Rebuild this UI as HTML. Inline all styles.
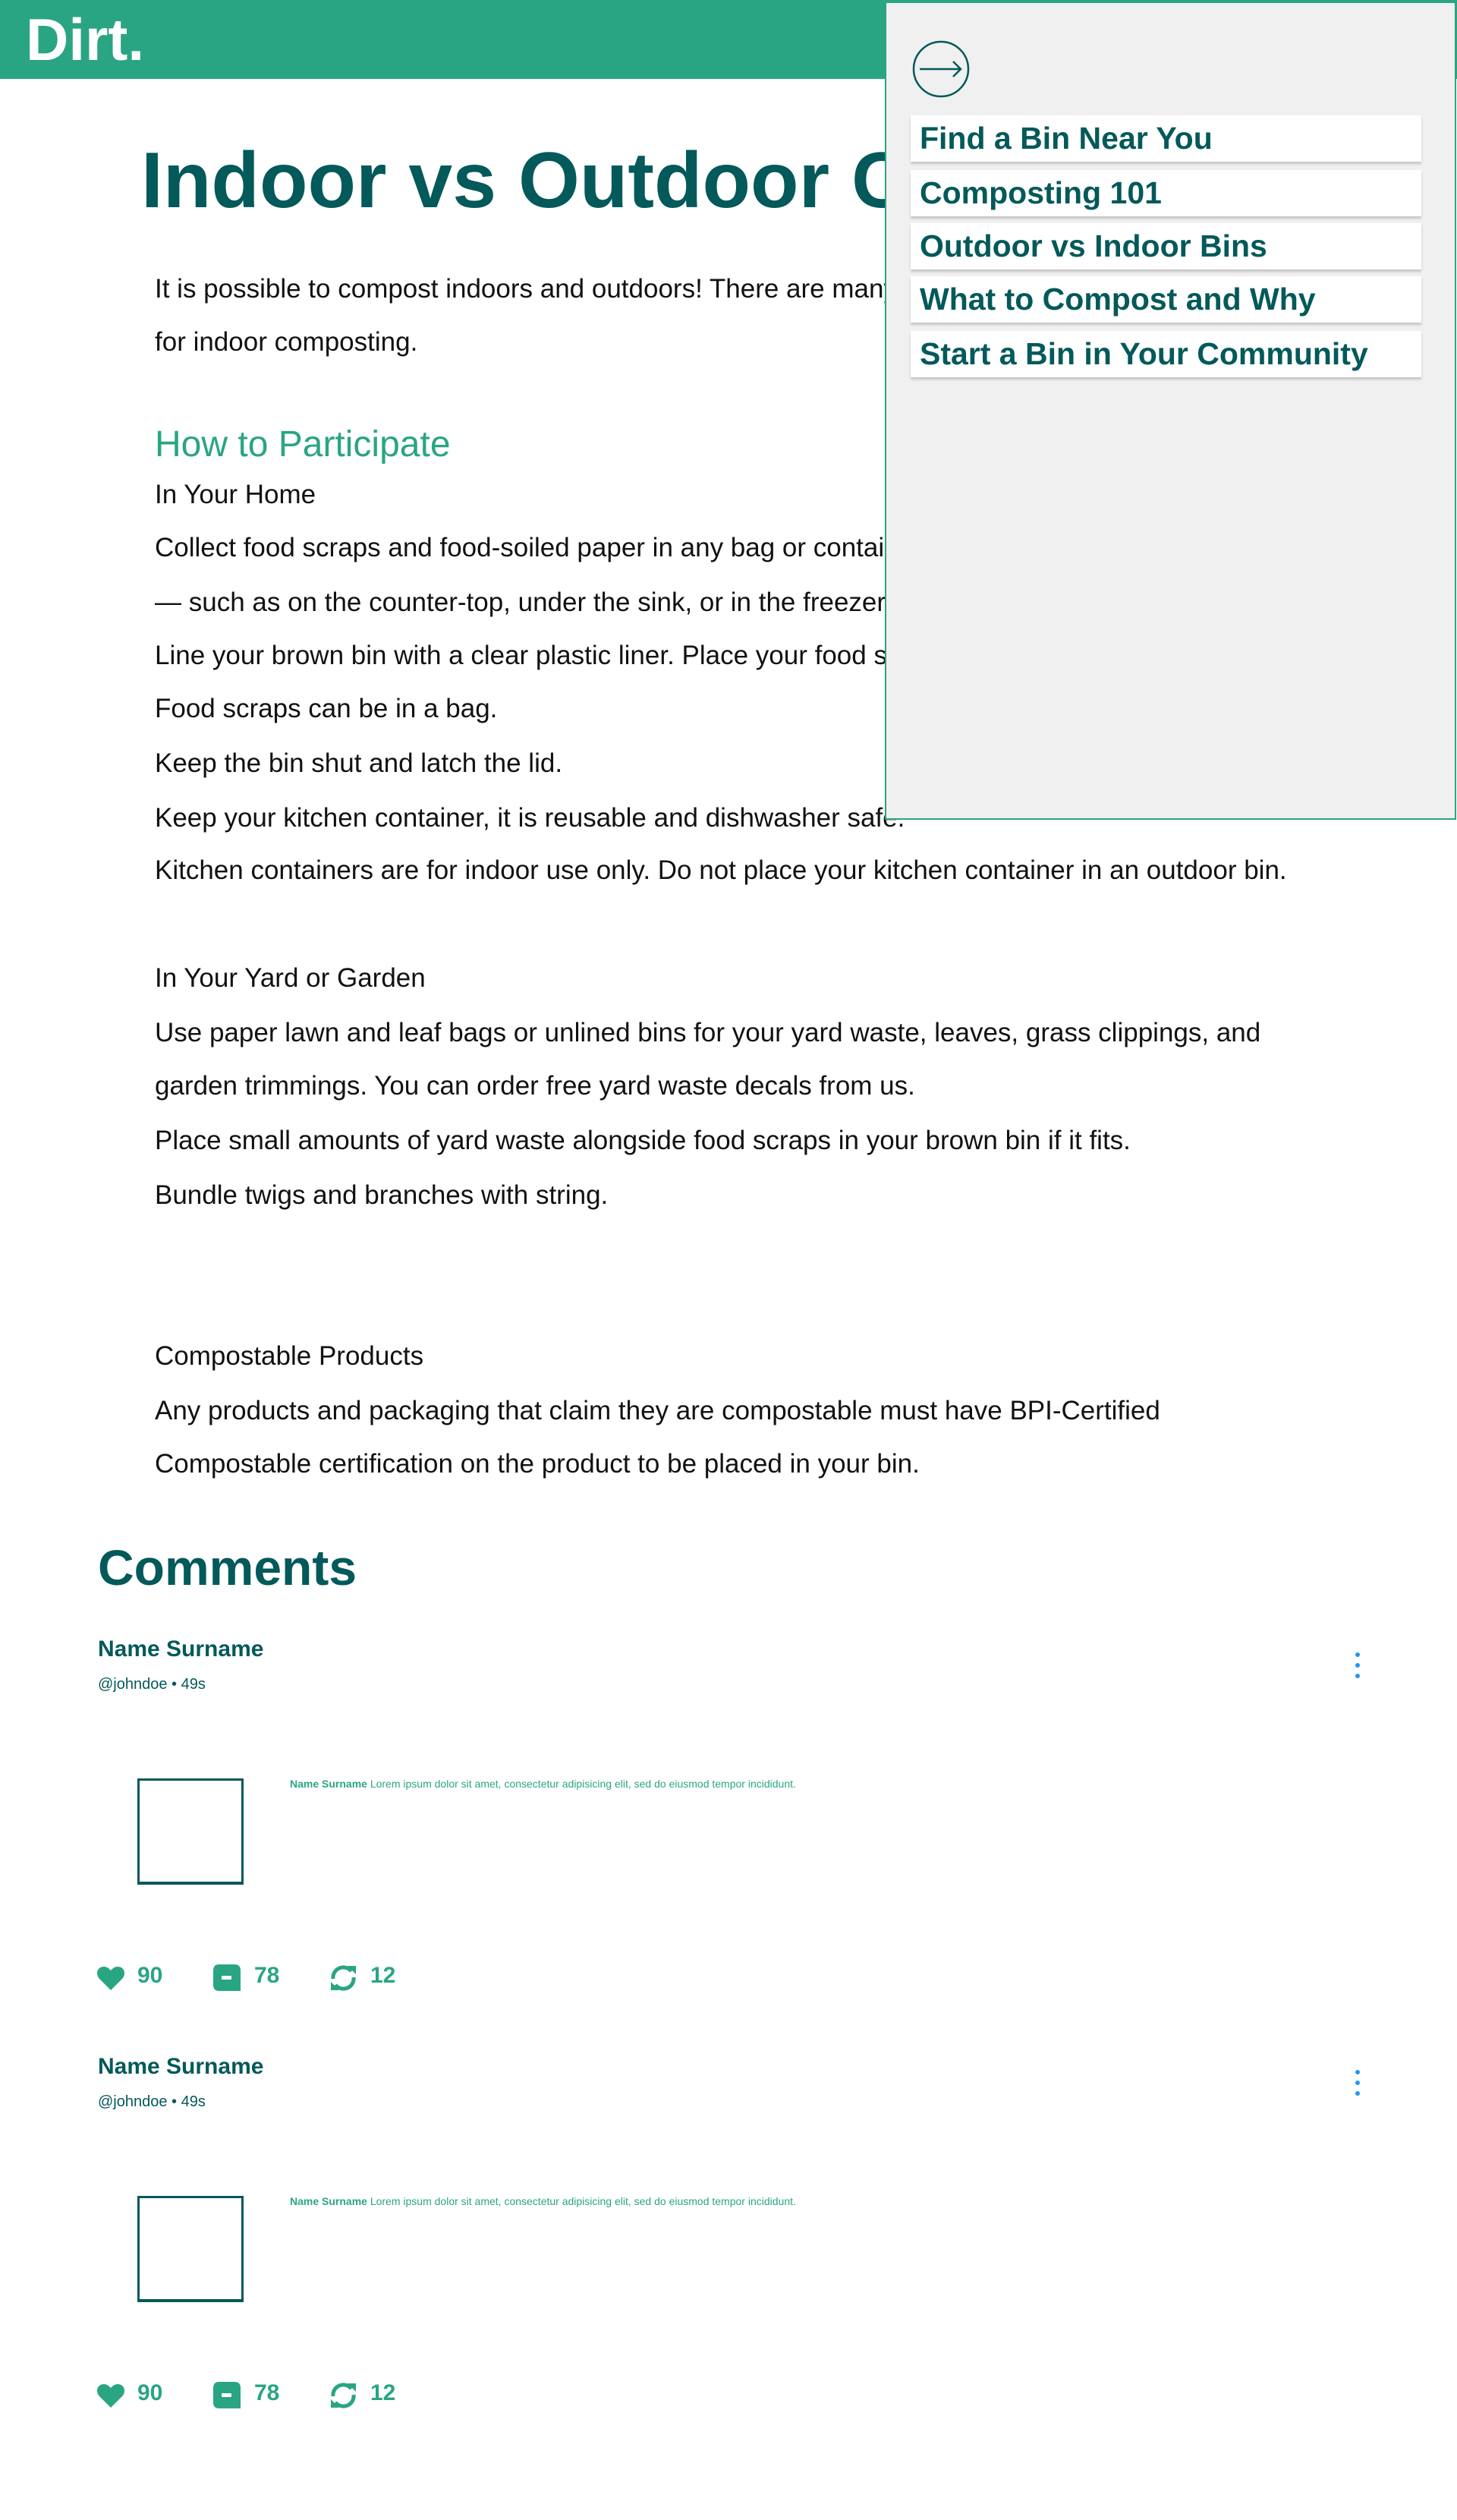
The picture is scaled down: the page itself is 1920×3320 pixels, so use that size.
<!DOCTYPE html>
<html><head><meta charset="utf-8"><style>
*{margin:0;padding:0;box-sizing:border-box}
body{width:1920px;height:3320px;position:relative;background:#fff;font-family:"Liberation Sans",Arial,sans-serif;overflow:hidden;color:#111}
.a{position:absolute;white-space:nowrap}
.hdr{left:0;top:0;width:1920px;height:104px;background:#2aa583}
.logo{left:34px;top:10px;font-size:78px;font-weight:bold;color:#fff;line-height:84px}
.title{left:186px;top:178px;font-size:104px;font-weight:bold;color:#04595a;line-height:120px}
.t{left:204px;font-size:35px;line-height:40px;color:#111}
.h2{left:204px;font-size:48px;line-height:56px;color:#2aa583}
.side{left:1166px;top:2px;width:753px;height:1078px;background:#f0f0f0;border:2px solid #2aa583;z-index:5}
.mi{position:absolute;left:32px;width:673px;height:61px;background:#fff;box-shadow:0 3px 3px rgba(0,0,0,.18);font-size:41px;font-weight:bold;color:#04595a;line-height:61px;padding-left:12px;white-space:nowrap}
.cm{left:129px;top:2028px;font-size:66px;font-weight:bold;color:#04595a;line-height:74px}
.nm{font-size:30px;font-weight:bold;color:#04595a;line-height:34px;left:129px}
.hd{font-size:20px;color:#04595a;line-height:24px;left:129px}
.box{left:181px;width:140px;height:140px;border:3px solid #04595a;border-width:3px 3px 4px 3px}
.sm{left:382px;font-size:14px;color:#2aa583;line-height:16px}
.num{font-size:30px;font-weight:bold;color:#2aa583;line-height:36px}
</style></head><body>
<div class="a hdr"></div>
<div class="a logo">Dirt.</div>
<div class="a title">Indoor vs Outdoor Composting</div>
<div class="a t" style="top:361px">It is possible to compost indoors and outdoors! There are many options for outdoor composting and</div>
<div class="a t" style="top:431px">for indoor composting.</div>
<div class="a h2" style="top:558px">How to Participate</div>
<div class="a t" style="top:632px">In Your Home</div>
<div class="a t" style="top:702px">Collect food scraps and food-soiled paper in any bag or container in your kitchen</div>
<div class="a t" style="top:774px">— such as on the counter-top, under the sink, or in the freezer.</div>
<div class="a t" style="top:844px">Line your brown bin with a clear plastic liner. Place your food scraps in the bin.</div>
<div class="a t" style="top:914px">Food scraps can be in a bag.</div>
<div class="a t" style="top:986px">Keep the bin shut and latch the lid.</div>
<div class="a t" style="top:1058px">Keep your kitchen container, it is reusable and dishwasher safe.</div>
<div class="a t" style="top:1127px">Kitchen containers are for indoor use only. Do not place your kitchen container in an outdoor bin.</div>
<div class="a t" style="top:1269px">In Your Yard or Garden</div>
<div class="a t" style="top:1341px">Use paper lawn and leaf bags or unlined bins for your yard waste, leaves, grass clippings, and</div>
<div class="a t" style="top:1411px">garden trimmings. You can order free yard waste decals from us.</div>
<div class="a t" style="top:1483px">Place small amounts of yard waste alongside food scraps in your brown bin if it fits.</div>
<div class="a t" style="top:1555px">Bundle twigs and branches with string.</div>
<div class="a t" style="top:1767px">Compostable Products</div>
<div class="a t" style="top:1839px">Any products and packaging that claim they are compostable must have BPI-Certified</div>
<div class="a t" style="top:1909px">Compostable certification on the product to be placed in your bin.</div>

<div class="a side">
<svg style="position:absolute;left:34px;top:49px" width="76" height="76" viewBox="0 0 76 76"><circle cx="38" cy="38" r="36" fill="none" stroke="#04595a" stroke-width="2.5"/><path d="M10 38H64M54 28L64 38L54 48" fill="none" stroke="#04595a" stroke-width="2.5"/></svg>
<div class="mi" style="top:148px">Find a Bin Near You</div>
<div class="mi" style="top:220px">Composting 101</div>
<div class="mi" style="top:290px">Outdoor vs Indoor Bins</div>
<div class="mi" style="top:360px">What to Compost and Why</div>
<div class="mi" style="top:432px">Start a Bin in Your Community</div>
</div>

<div class="a cm">Comments</div>

<div class="a nm" style="top:2156px">Name Surname</div>
<div class="a hd" style="top:2207px">@johndoe • 49s</div>
<svg class="a" style="left:1785px;top:2176px" width="8" height="38"><circle cx="4" cy="4" r="3" fill="#2196f3"/><circle cx="4" cy="18" r="3" fill="#2196f3"/><circle cx="4" cy="32" r="3" fill="#2196f3"/></svg>
<div class="a box" style="top:2343px"></div>
<div class="a sm" style="top:2342px"><b>Name Surname</b> Lorem ipsum dolor sit amet, consectetur adipisicing elit, sed do eiusmod tempor incididunt.</div>
<svg class="a" style="left:128px;top:2590px" width="36" height="32" viewBox="0 0 36 32"><path d="M18 32L3 17C-1 13-1 6 3 3C7 0 13 0 18 6C23 0 29 0 33 3C37 6 37 13 33 17Z" fill="#2aa583"/></svg>
<div class="a num" style="left:181px;top:2585px">90</div>
<svg class="a" style="left:281px;top:2588px" width="36" height="35" viewBox="0 0 36 35"><path d="M8 0H28Q36 0 36 8V35H8Q0 35 0 27V8Q0 0 8 0Z" fill="#2aa583"/><rect x="11" y="15" width="13" height="5" rx="1" fill="#fff"/></svg>
<div class="a num" style="left:335px;top:2585px">78</div>
<svg class="a" style="left:434px;top:2588px" width="37" height="36" viewBox="0 0 37 36"><path d="M5 19A13.5 13.5 0 0 1 29 9" fill="none" stroke="#2aa583" stroke-width="5"/><path d="M24 2H35V13Z" fill="#2aa583"/><path d="M32 17A13.5 13.5 0 0 1 8 27" fill="none" stroke="#2aa583" stroke-width="5"/><path d="M13 34H2V23Z" fill="#2aa583"/></svg>
<div class="a num" style="left:488px;top:2585px">12</div>

<div class="a nm" style="top:2706px">Name Surname</div>
<div class="a hd" style="top:2757px">@johndoe • 49s</div>
<svg class="a" style="left:1785px;top:2726px" width="8" height="38"><circle cx="4" cy="4" r="3" fill="#2196f3"/><circle cx="4" cy="18" r="3" fill="#2196f3"/><circle cx="4" cy="32" r="3" fill="#2196f3"/></svg>
<div class="a box" style="top:2893px"></div>
<div class="a sm" style="top:2892px"><b>Name Surname</b> Lorem ipsum dolor sit amet, consectetur adipisicing elit, sed do eiusmod tempor incididunt.</div>
<svg class="a" style="left:128px;top:3140px" width="36" height="32" viewBox="0 0 36 32"><path d="M18 32L3 17C-1 13-1 6 3 3C7 0 13 0 18 6C23 0 29 0 33 3C37 6 37 13 33 17Z" fill="#2aa583"/></svg>
<div class="a num" style="left:181px;top:3135px">90</div>
<svg class="a" style="left:281px;top:3138px" width="36" height="35" viewBox="0 0 36 35"><path d="M8 0H28Q36 0 36 8V35H8Q0 35 0 27V8Q0 0 8 0Z" fill="#2aa583"/><rect x="11" y="15" width="13" height="5" rx="1" fill="#fff"/></svg>
<div class="a num" style="left:335px;top:3135px">78</div>
<svg class="a" style="left:434px;top:3138px" width="37" height="36" viewBox="0 0 37 36"><path d="M5 19A13.5 13.5 0 0 1 29 9" fill="none" stroke="#2aa583" stroke-width="5"/><path d="M24 2H35V13Z" fill="#2aa583"/><path d="M32 17A13.5 13.5 0 0 1 8 27" fill="none" stroke="#2aa583" stroke-width="5"/><path d="M13 34H2V23Z" fill="#2aa583"/></svg>
<div class="a num" style="left:488px;top:3135px">12</div>
</body></html>
